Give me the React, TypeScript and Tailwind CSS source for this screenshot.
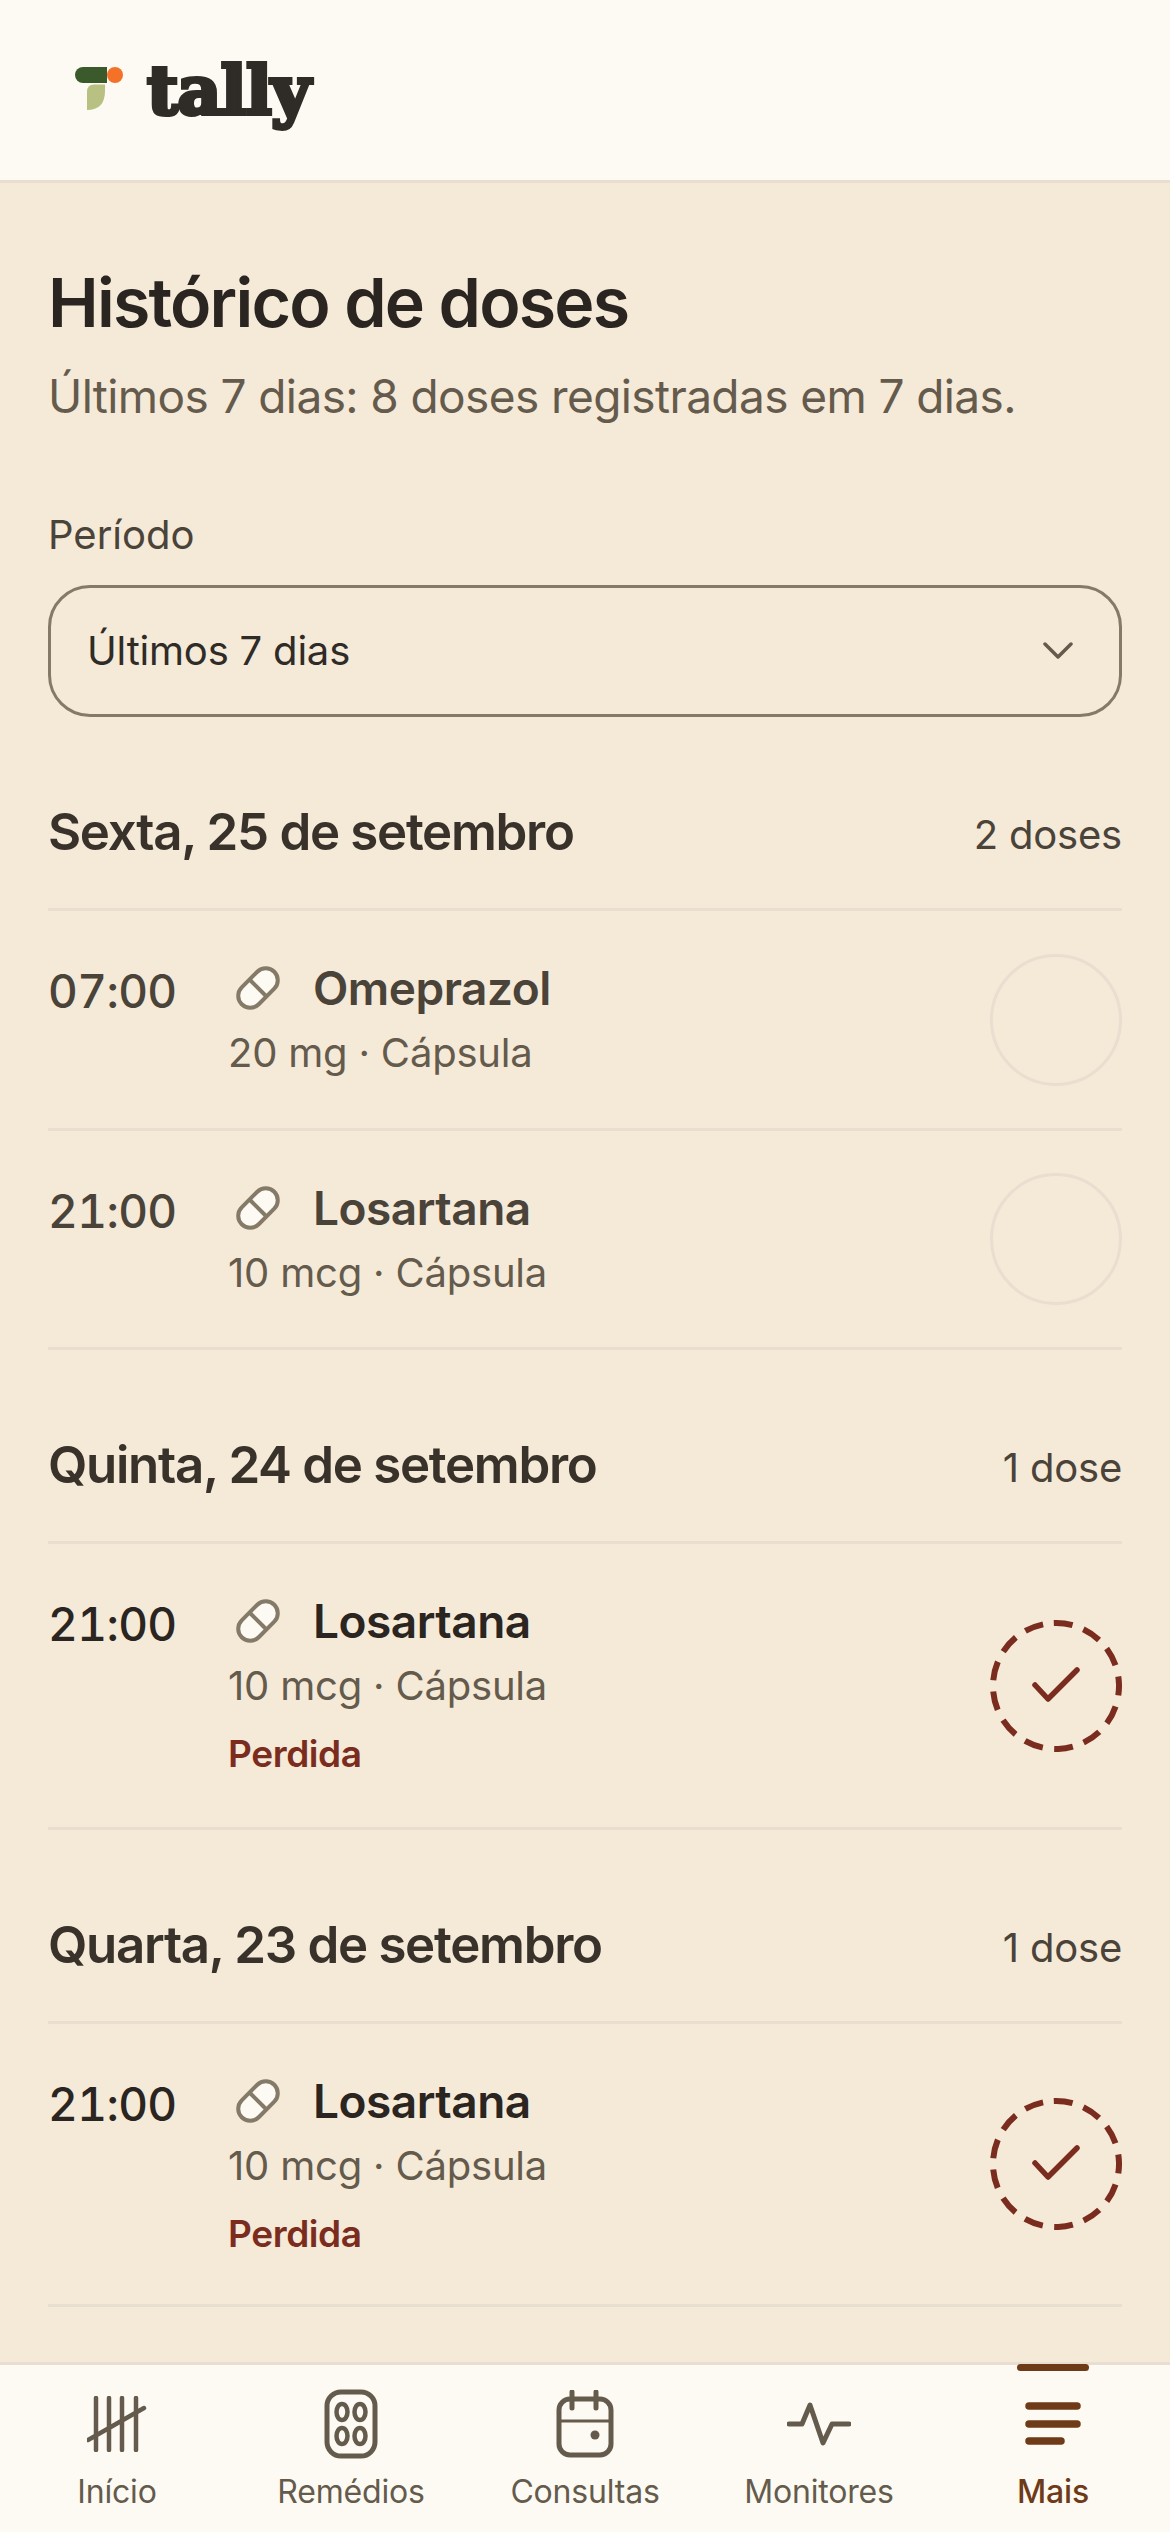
import React from "react";

function Pill() {
  return (
    <svg width="46" height="48" viewBox="0 0 46 48" className="block">
      <g transform="rotate(-45 23 24)">
        <rect x="0" y="12" width="46" height="24" rx="12" fill="#fdfaf3" stroke="#857a68" strokeWidth="4" />
        <line x1="23" y1="12" x2="23" y2="36" stroke="#857a68" strokeWidth="4" />
      </g>
    </svg>
  );
}

function DashedCheck() {
  return (
    <svg width="132" height="132" viewBox="0 0 132 132" className="block">
      <circle cx="66" cy="66" r="63" fill="none" stroke="#7a2c1e" strokeWidth="6" strokeDasharray="19 11.45" transform="rotate(-92 66 66)" />
      <path d="M45 65 L58 79 L87 50" fill="none" stroke="#7a2c1e" strokeWidth="5.5" strokeLinecap="round" strokeLinejoin="round" />
    </svg>
  );
}

type Dose = { time: string; name: string; detail: string; missed?: boolean; h: string };

function DoseRow({ dose }: { dose: Dose }) {
  const strong = dose.missed ? "text-[#2a2521]" : "text-[#4a4339]";
  return (
    <div className={`flex items-center border-b-[3px] border-[#e8dfd0] ${dose.h}`}>
      <div className="flex-1 min-w-0 self-start pt-[49px] flex">
        <div className={`w-[180px] mt-[3px] text-[46px] leading-[56px] font-medium tabular-nums tracking-[-0.6px] ${strong}`}>{dose.time}</div>
        <div className="flex flex-col">
          <div className="flex items-center gap-[32px] h-[56px] pl-[7px]">
            <Pill />
            <span className={`text-[46px] leading-[56px] font-semibold tracking-[-0.5px] ${strong}`}>{dose.name}</span>
          </div>
          <div className="text-[40px] leading-[52px] mt-[11px] text-[#645b4d] tracking-[-0.2px]">{dose.detail}</div>
          {dose.missed && <div className="text-[37px] leading-[48px] mt-[18px] font-semibold text-[#7a2c1e] tracking-[-0.4px]">Perdida</div>}
        </div>
      </div>
      {dose.missed ? <DashedCheck /> : <div className="w-[132px] h-[132px] rounded-full border-[3px] border-[#e8dfd0]" />}
    </div>
  );
}

function Group({ title, count, doses }: { title: string; count: string; doses: Dose[] }) {
  return (
    <section>
      <div className="flex items-center justify-between h-[194px] border-b-[3px] border-[#e8dfd0] pt-[39px]">
        <h2 className="text-[51px] font-semibold text-[#38322b] tracking-[-1.3px]">{title}</h2>
        <span className="mt-[6px] text-[40px] text-[#4a4339] tracking-[-0.2px]">{count}</span>
      </div>
      {doses.map((d, i) => (
        <DoseRow key={i} dose={d} />
      ))}
    </section>
  );
}

function NavItem({ label, active, children }: { label: string; active?: boolean; children: React.ReactNode }) {
  return (
    <div className="relative flex-1 flex flex-col items-center">
      {active && <div className="absolute top-[-1px] left-1/2 -translate-x-1/2 w-[72px] h-[7px] rounded-full bg-[#6f3a18]" />}
      <div className="h-[72px] mt-[23px] flex items-center justify-center">{children}</div>
      <div className={`mt-[12px] text-[32px] leading-[40px] tracking-[-0.2px] ${active ? "font-medium text-[#6f3a18]" : "text-[#645b4d]"}`}>{label}</div>
    </div>
  );
}

export default function App() {
  return (
    <div className="w-[1170px] h-[2532px] overflow-hidden flex flex-col bg-[#f5e9d8] font-['Inter','Noto_Sans',sans-serif]">
      <header className="shrink-0 h-[183px] border-b-[3px] border-[#e8dfd0] bg-[#fdfaf3] flex items-center pl-[75px] gap-[24px]">
        <svg width="48" height="44" viewBox="0 0 48 44" className="block mt-[-2px]">
          <path d="M8 0 H32 V16 H8 A8 8 0 0 1 8 0 Z" fill="#3a5a2b" />
          <circle cx="40" cy="8" r="8" fill="#f47228" />
          <path d="M30 17.5 H19 Q12 17.5 12 25 V43 Q30 43 30 24 Z" fill="#b8c082" />
        </svg>
        <span className="font-['DejaVu_Serif',serif] font-bold text-[68px] leading-none text-[#2f2b26] tracking-[-0.8px] [-webkit-text-stroke:4px_#2f2b26]">tally</span>
      </header>

      <main className="flex-1 min-h-0 overflow-hidden px-[48px]">
        <h1 className="mt-[79px] text-[68px] leading-[80px] font-semibold text-[#2a2521] tracking-[-1.8px]">Histórico de doses</h1>
        <p className="mt-[24px] text-[46px] leading-[60px] text-[#645b4d] tracking-[-0.6px]">Últimos 7 dias: 8 doses registradas em 7 dias.</p>
        <div className="mt-[85px] text-[40px] leading-[48px] text-[#4a4339]">Período</div>
        <div className="mt-[26px] h-[132px] rounded-[42px] border-[3px] border-[#857a68] flex items-center justify-between pl-[36px] pr-[46px]">
          <span className="text-[40px] text-[#2f2b26] tracking-[-0.2px]">Últimos 7 dias</span>
          <svg width="30" height="18" viewBox="0 0 30 18" className="block">
            <path d="M2 2 L15 15 L28 2" fill="none" stroke="#645b4d" strokeWidth="3.5" strokeLinecap="round" strokeLinejoin="round" />
          </svg>
        </div>
        <div>
          <Group
            title="Sexta, 25 de setembro"
            count="2 doses"
            doses={[
              { time: "07:00", name: "Omeprazol", detail: "20 mg · Cápsula", h: "h-[220px]" },
              { time: "21:00", name: "Losartana", detail: "10 mcg · Cápsula", h: "h-[219px]" },
            ]}
          />
          <Group
            title="Quinta, 24 de setembro"
            count="1 dose"
            doses={[{ time: "21:00", name: "Losartana", detail: "10 mcg · Cápsula", missed: true, h: "h-[286px]" }]}
          />
          <Group
            title="Quarta, 23 de setembro"
            count="1 dose"
            doses={[{ time: "21:00", name: "Losartana", detail: "10 mcg · Cápsula", missed: true, h: "h-[283px]" }]}
          />
        </div>
      </main>

      <nav className="shrink-0 h-[170px] border-t-[3px] border-[#e8dfd0] bg-[#fdfaf3] flex items-start">
        <NavItem label="Início">
          <svg width="60" height="56" viewBox="0 0 60 56" fill="none" stroke="#645b4d" strokeWidth="4.5" strokeLinecap="round">
            <path d="M9 2 V54 M22 2 V54 M35 2 V54 M49 2 V54 M1 44 L57 12" />
          </svg>
        </NavItem>
        <NavItem label="Remédios">
          <svg width="54" height="70" viewBox="0 0 54 70" fill="none" stroke="#645b4d">
            <rect x="3" y="3" width="48" height="64" rx="14" strokeWidth="5" />
            <ellipse cx="18" cy="23" rx="5.5" ry="8" strokeWidth="4.5" />
            <ellipse cx="36" cy="23" rx="5.5" ry="8" strokeWidth="4.5" />
            <ellipse cx="18" cy="47" rx="5.5" ry="8" strokeWidth="4.5" />
            <ellipse cx="36" cy="47" rx="5.5" ry="8" strokeWidth="4.5" />
          </svg>
        </NavItem>
        <NavItem label="Consultas">
          <svg width="58" height="68" viewBox="0 0 58 68" fill="none" stroke="#645b4d">
            <rect x="3" y="9" width="52" height="56" rx="11" strokeWidth="5" />
            <path d="M3 31 H55" strokeWidth="3" />
            <path d="M16 2 V18 M40 2 V18" strokeWidth="5" strokeLinecap="round" />
            <circle cx="39" cy="45" r="4.5" fill="#645b4d" stroke="none" />
          </svg>
        </NavItem>
        <NavItem label="Monitores">
          <svg width="64" height="44" viewBox="0 0 64 44" fill="none" stroke="#645b4d" strokeWidth="5" strokeLinecap="round" strokeLinejoin="round">
            <path d="M2 22 H15 L23 3 L36 41 L45 22 H62" />
          </svg>
        </NavItem>
        <NavItem label="Mais" active>
          <svg width="56" height="44" viewBox="0 0 56 44" fill="none" stroke="#6f3a18" strokeWidth="7.5" strokeLinecap="round">
            <path d="M4 4 H52 M4 22 H52 M4 39 H36" />
          </svg>
        </NavItem>
      </nav>
    </div>
  );
}
